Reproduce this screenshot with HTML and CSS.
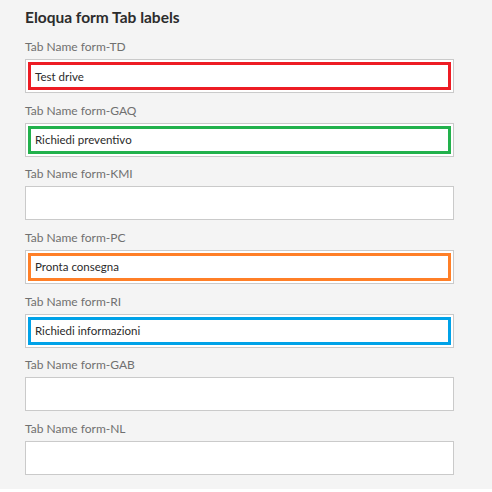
FILE: index.html
```html
<!DOCTYPE html>
<html lang="it">
<head>
<meta charset="utf-8">
<title>Eloqua form Tab labels</title>
<link rel="stylesheet" href="styles.css">
</head>
<body>
<section class="panel">
  <h2 class="title">Eloqua form Tab labels</h2>
  <div class="fields">
    <div class="field">
      <label class="label">Tab Name form-TD</label>
      <div class="input hl-red"><span class="value">Test drive</span></div>
    </div>
    <div class="field">
      <label class="label">Tab Name form-GAQ</label>
      <div class="input hl-green"><span class="value">Richiedi preventivo</span></div>
    </div>
    <div class="field">
      <label class="label">Tab Name form-KMI</label>
      <div class="input"></div>
    </div>
    <div class="field">
      <label class="label">Tab Name form-PC</label>
      <div class="input hl-orange"><span class="value">Pronta consegna</span></div>
    </div>
    <div class="field">
      <label class="label">Tab Name form-RI</label>
      <div class="input hl-blue"><span class="value">Richiedi informazioni</span></div>
    </div>
    <div class="field">
      <label class="label">Tab Name form-GAB</label>
      <div class="input"></div>
    </div>
    <div class="field">
      <label class="label">Tab Name form-NL</label>
      <div class="input"></div>
    </div>
  </div>
</section>
</body>
</html>
```
FILE: styles.css
```css
html, body {
  margin: 0;
  padding: 0;
  background: #ffffff;
}
body {
  font-family: Lato, "Open Sans", sans-serif;
}
.panel {
  background: #f4f4f4;
  padding: 7px 0 14px 25px;
  width: 492px;
  box-sizing: border-box;
}
.title {
  margin: 0;
  font-size: 15.5px;
  line-height: 20px;
  font-weight: 700;
  color: #2c2c2c;
}
.fields {
  margin-top: 12px;
  display: flex;
  flex-direction: column;
  gap: 9.67px;
}
.field {
  display: flex;
  flex-direction: column;
  gap: 4px;
}
.label {
  font-size: 12px;
  line-height: 16px;
  color: #707070;
}
.input {
  width: 429px;
  height: 34px;
  box-sizing: border-box;
  border: 1px solid #cacaca;
  background: #ffffff;
  padding: 0 9px;
  display: flex;
  align-items: center;
}
.value {
  font-size: 11.5px;
  color: #2a2a2a;
}
.hl-red { box-shadow: inset 0 0 0 2px #fff, inset 0 0 0 5px #ed1c24; }
.hl-green { box-shadow: inset 0 0 0 2px #fff, inset 0 0 0 5px #22b14c; }
.hl-orange { box-shadow: inset 0 0 0 2px #fff, inset 0 0 0 5px #ff7f27; }
.hl-blue { box-shadow: inset 0 0 0 2px #fff, inset 0 0 0 5px #00a2e8; }
```
